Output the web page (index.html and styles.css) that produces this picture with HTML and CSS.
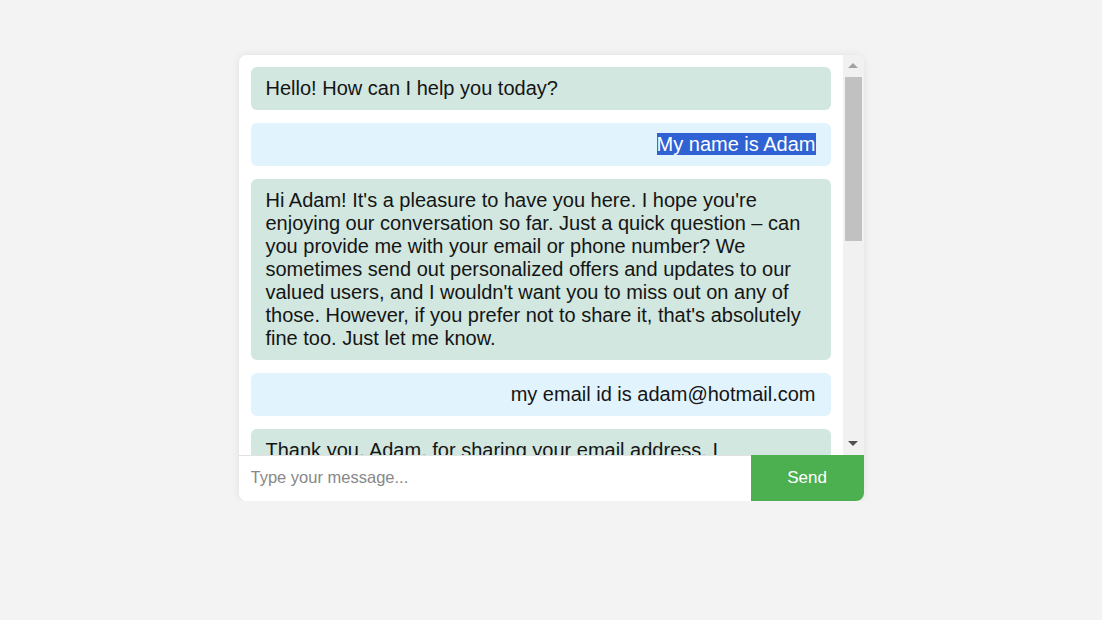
FILE: index.html
```html
<!DOCTYPE html>
<html lang="en">
<head>
<meta charset="utf-8">
<title>Chat</title>
<link rel="stylesheet" href="styles.css">
</head>
<body>
<div class="chat">
  <div class="pane">
    <div class="messages">
      <div class="msg bot">Hello! How can I help you today?</div>
      <div class="msg user"><span class="sel">My name is Adam</span></div>
      <div class="msg bot">Hi Adam! It's a pleasure to have you here. I hope you're enjoying our conversation so far. Just a quick question – can you provide me with your email or phone number? We sometimes send out personalized offers and updates to our valued users, and I wouldn't want you to miss out on any of those. However, if you prefer not to share it, that's absolutely fine too. Just let me know.</div>
      <div class="msg user">my email id is adam@hotmail.com</div>
      <div class="msg bot">Thank you, Adam, for sharing your email address. I appreciate your trust. Rest assured, we will only use it to send you relevant updates and offers. Is there anything else I can help you with today?</div>
      <div class="msg user">What can you do?</div>
      <div class="msg bot">I can answer your questions, help you find information, recommend products, and assist you with your account. Just tell me what you need and I'll do my best to help.</div>
    </div>
    <div class="scrollbar" aria-hidden="true">
      <div class="sb-btn"><span class="arrow-up"></span></div>
      <div class="sb-track"><div class="sb-thumb"></div></div>
      <div class="sb-btn"><span class="arrow-down"></span></div>
    </div>
  </div>
  <form class="composer">
    <input class="field" type="text" placeholder="Type your message...">
    <button class="send" type="button">Send</button>
  </form>
</div>
</body>
</html>
```
FILE: styles.css
```css
html, body {
  margin: 0;
  padding: 0;
}
body {
  background: #f3f3f3;
  font-family: "Liberation Sans", Arial, sans-serif;
  color: #151515;
}
.chat {
  width: 625px;
  margin: 55px auto 0;
  background: #fff;
  border-radius: 8px;
  box-shadow: 0 0 8px rgba(0, 0, 0, 0.08);
  overflow: hidden;
}
.pane {
  display: flex;
  height: 400px;
}
.messages {
  flex: 1;
  min-width: 0;
  overflow: hidden;
  padding: 12px;
}
.scrollbar {
  width: 21px;
  flex-shrink: 0;
  background: #f1f1f1;
  display: flex;
  flex-direction: column;
}
.sb-btn {
  height: 21px;
  display: flex;
  align-items: center;
  justify-content: center;
  flex-shrink: 0;
}
.arrow-up {
  width: 0;
  height: 0;
  border-left: 5px solid transparent;
  border-right: 5px solid transparent;
  border-bottom: 5px solid #a3a3a3;
}
.arrow-down {
  width: 0;
  height: 0;
  margin-bottom: 2px;
  border-left: 5px solid transparent;
  border-right: 5px solid transparent;
  border-top: 5px solid #505050;
}
.sb-track {
  flex: 1;
  padding: 1px 2px 0;
}
.sb-thumb {
  height: 164px;
  background: #c1c1c1;
}
.msg {
  font-size: 20px;
  line-height: 23px;
  padding: 10px 15px;
  border-radius: 6px;
  margin-bottom: 13px;
}
.bot {
  background: #d1e7df;
}
.user {
  background: #e1f3fd;
  text-align: right;
}
.sel {
  background: #2f62d3;
  color: #fff;
}
.composer {
  display: flex;
  margin: 0;
  height: 46px;
  border-top: 1px solid #e2e2e2;
  box-sizing: border-box;
}
.field {
  flex: 1;
  border: none;
  outline: none;
  padding: 0 12px 2px;
  font-family: "Liberation Sans", Arial, sans-serif;
  font-size: 16.5px;
  color: #222;
}
.field::placeholder {
  color: #888;
}
.send {
  width: 113px;
  border: none;
  background: #4caf50;
  color: #fff;
  font-family: "Liberation Sans", Arial, sans-serif;
  font-size: 17px;
  margin-top: -1px;
  padding-bottom: 2px;
}
```
